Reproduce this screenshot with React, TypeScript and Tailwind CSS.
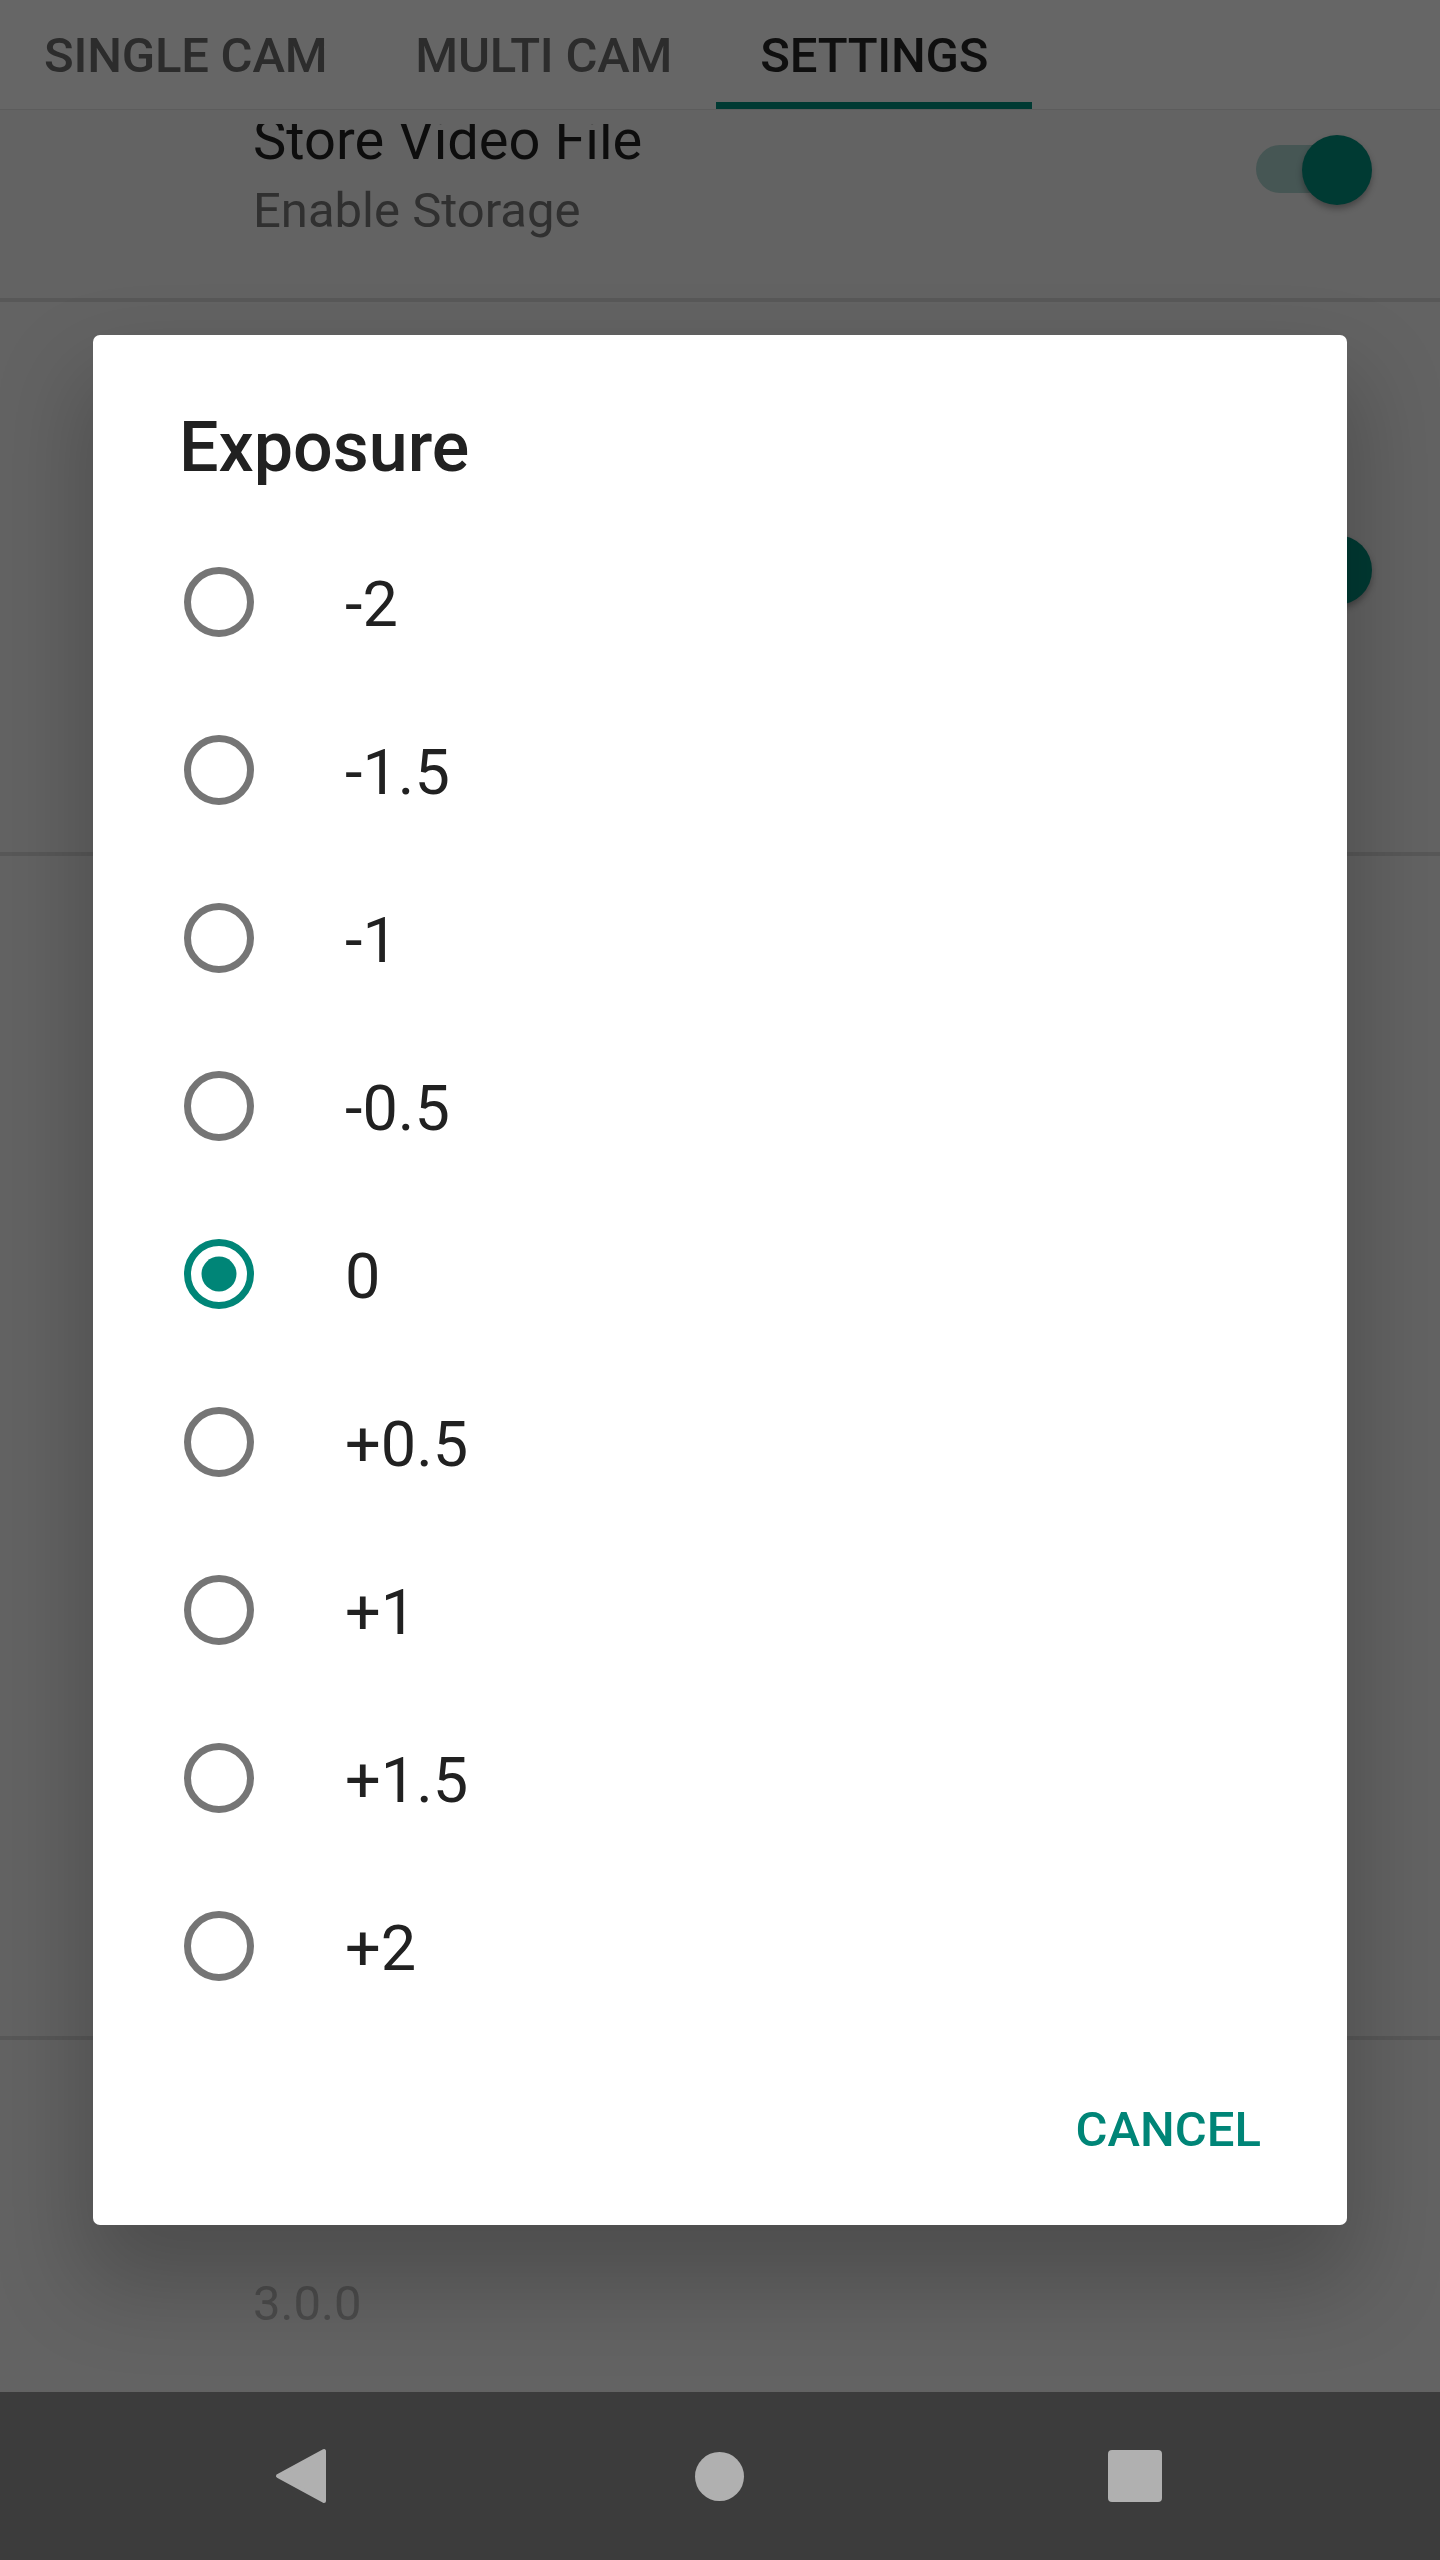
import React from "react";

function Toggle() {
  return (
    <div className="relative h-[70px] w-[116px]">
      <div className="absolute left-0 top-[10px] h-[48px] w-[112px] rounded-full bg-[#465654]" />
      <div className="absolute right-0 top-0 h-[70px] w-[70px] rounded-full bg-[#003a33] shadow-[0_4px_6px_rgba(0,0,0,0.3)]" />
    </div>
  );
}

function Radio({ checked }: { checked: boolean }) {
  return (
    <svg width="70" height="70" viewBox="0 0 70 70" className="shrink-0">
      <circle
        cx="35"
        cy="35"
        r="31.5"
        fill="none"
        stroke={checked ? "#008577" : "#757575"}
        strokeWidth="7"
      />
      {checked && <circle cx="35" cy="35" r="17.5" fill="#008577" />}
    </svg>
  );
}

const options = ["-2", "-1.5", "-1", "-0.5", "0", "+0.5", "+1", "+1.5", "+2"];

export default function App() {
  return (
    <div className="relative h-[2560px] w-[1440px] overflow-hidden bg-[#636363] font-[Roboto,sans-serif]">
      {/* Tab bar */}
      <div className="flex h-[109px] bg-[#666666]">
        {[
          { label: "SINGLE CAM", active: false },
          { label: "MULTI CAM", active: false },
          { label: "SETTINGS", active: true },
        ].map((t) => (
          <div key={t.label} className="flex h-full flex-col px-[44px]">
            <div
              className={`mt-[27px] whitespace-nowrap text-[49px] font-medium leading-[58px] tracking-[-0.2px] ${
                t.active ? "text-[#0f0f0f]" : "text-[#2c2c2c]"
              }`}
            >
              {t.label}
            </div>
            <div className="mt-auto -mx-[44px] h-[7px]">
              {t.active && <div className="h-full w-full bg-[#003a33]" />}
            </div>
          </div>
        ))}
      </div>
      <div className="h-[1px] bg-[#5c5c5c]" />

      {/* Settings list (dimmed) */}
      <div className="mt-[14px] overflow-hidden">
        <div className="-mt-[17px] flex h-[191px] pl-[253px] pr-[68px]">
          <div className="flex flex-1 flex-col">
            <div className="text-[56px] leading-[66px] text-[#0d0d0d]">Store Video File</div>
            <div className="mt-[9px] text-[49px] leading-[58px] text-[#303030]">Enable Storage</div>
          </div>
          <div className="mt-[28px]">
            <Toggle />
          </div>
        </div>
      </div>
      <div className="h-[4px] bg-[#585858]" />
      <div className="flex h-[550px] justify-end pr-[68px] pt-[233px]">
        <Toggle />
      </div>
      <div className="h-[4px] bg-[#585858]" />
      <div className="h-[1180px]" />
      <div className="h-[4px] bg-[#585858]" />
      <div className="h-[352px] pl-[253px] pt-[235px]">
        <div className="text-[49px] leading-[58px] text-[#4b4b4b]">3.0.0</div>
      </div>

      {/* Navigation bar */}
      <div className="flex h-[168px] items-center bg-[#3c3c3c] pl-[275px]">
        <svg width="52" height="56" viewBox="0 0 52 56">
          <path d="M49 3 L49 53 L3 28 Z" fill="#b0b0b0" stroke="#b0b0b0" strokeWidth="4" strokeLinejoin="round" />
        </svg>
        <div className="ml-[368px] h-[49px] w-[49px] rounded-full bg-[#b0b0b0]" />
        <div className="ml-[364px] h-[52px] w-[54px] rounded-[4px] bg-[#b0b0b0]" />
      </div>

      {/* Dialog overlay */}
      <div className="absolute inset-0 flex items-center justify-center">
        <div className="flex w-[1254px] flex-col rounded-[7px] bg-white shadow-[0_50px_90px_10px_rgba(0,0,0,0.22)]">
          <div className="pl-[86px] pt-[71px] text-[70px] font-medium leading-[82px] text-[#212121]">
            Exposure
          </div>
          <div className="mt-[30px] flex flex-col">
            {options.map((o) => (
              <div key={o} className="flex h-[168px] items-center pl-[91px]">
                <Radio checked={o === "0"} />
                <div className="ml-[91px] pt-[5px] text-[63px] leading-[74px] text-[#212121]">{o}</div>
              </div>
            ))}
          </div>
          <div className="mt-[37px] flex h-[126px] items-center justify-end pr-[86px]">
            <div className="text-[49px] font-medium leading-[58px] text-[#008577]">CANCEL</div>
          </div>
          <div className="h-[32px]" />
        </div>
      </div>
    </div>
  );
}
